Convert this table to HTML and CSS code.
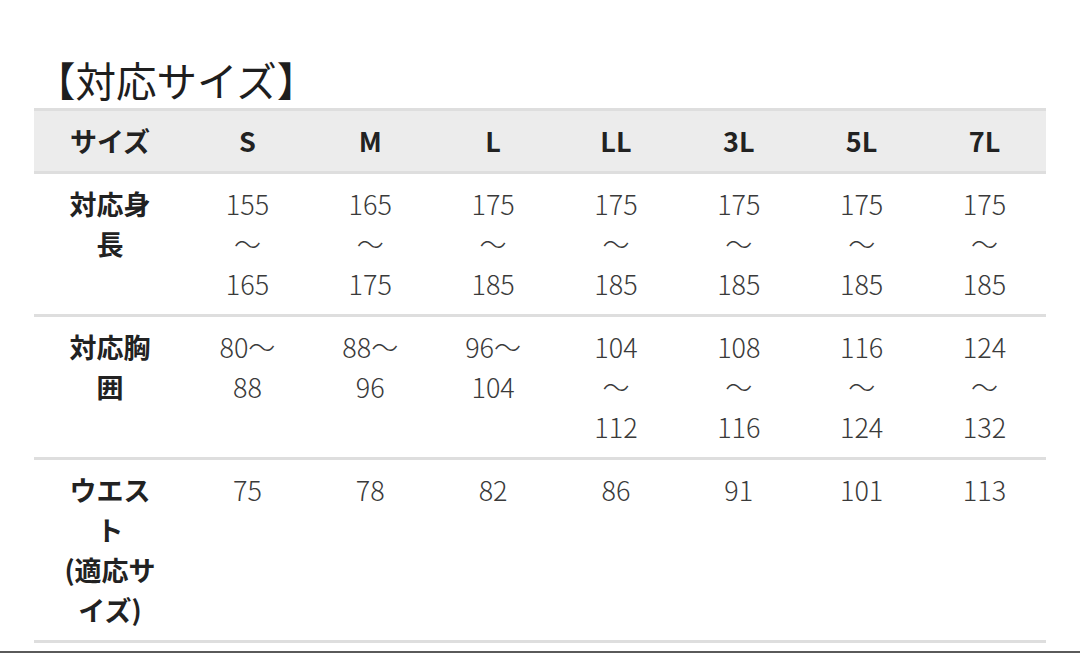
FILE: index.html
```html
<!DOCTYPE html>
<html lang="ja">
<head>
<meta charset="utf-8">
<title>対応サイズ</title>
<link rel="stylesheet" href="styles.css">
</head>
<body>
<div class="page">
  <div class="content">
    <h2 class="title">【対応サイズ】</h2>
    <table class="size-table">
      <colgroup>
        <col class="col-label">
        <col><col><col><col><col><col><col>
      </colgroup>
      <thead>
        <tr>
          <th>サイズ</th>
          <th>S</th><th>M</th><th>L</th><th>LL</th><th>3L</th><th>5L</th><th>7L</th>
        </tr>
      </thead>
      <tbody>
        <tr>
          <th>対応身長</th>
          <td>155～165</td><td>165～175</td><td>175～185</td><td>175～185</td><td>175～185</td><td>175～185</td><td>175～185</td>
        </tr>
        <tr>
          <th>対応胸囲</th>
          <td>80～88</td><td>88～96</td><td>96～104</td><td>104～112</td><td>108～116</td><td>116～124</td><td>124～132</td>
        </tr>
        <tr>
          <th>ウエスト<br>(適応サイズ)</th>
          <td>75</td><td>78</td><td>82</td><td>86</td><td>91</td><td>101</td><td>113</td>
        </tr>
      </tbody>
    </table>
  </div>
  <div class="edge"></div>
</div>
</body>
</html>
```

FILE: styles.css
```css
html, body {
  margin: 0;
  padding: 0;
  background: #ffffff;
}

body {
  font-family: "Noto Sans CJK JP", "Noto Sans", sans-serif;
  color: #222222;
}

.page {
  height: 653px;
  display: flex;
  flex-direction: column;
  overflow: hidden;
}

.content {
  padding: 54px 34px 0 35px;
}

.title {
  margin: 0 0 2px 0;
  font-size: 40.5px;
  line-height: 52px;
  font-weight: 400;
  color: #1e1e1e;
  letter-spacing: 0;
}

.size-table {
  width: 1012px;
  margin-left: -1px;
  border-collapse: collapse;
  table-layout: fixed;
  font-size: 27px;
  line-height: 40px;
}

.col-label {
  width: 152px;
}

.size-table th,
.size-table td {
  padding: 10px 29px;
  text-align: center;
  vertical-align: top;
  border-bottom: 3px solid #dedede;
}

.size-table thead tr {
  background: #ececec;
}

.size-table thead th {
  border-top: 3px solid #dedede;
}

.size-table th {
  font-weight: 700;
  color: #222222;
}

.size-table td {
  font-weight: 300;
  color: #3a3a3a;
}

.edge {
  margin-top: auto;
  height: 2px;
  background: #5a5a5a;
}
```
